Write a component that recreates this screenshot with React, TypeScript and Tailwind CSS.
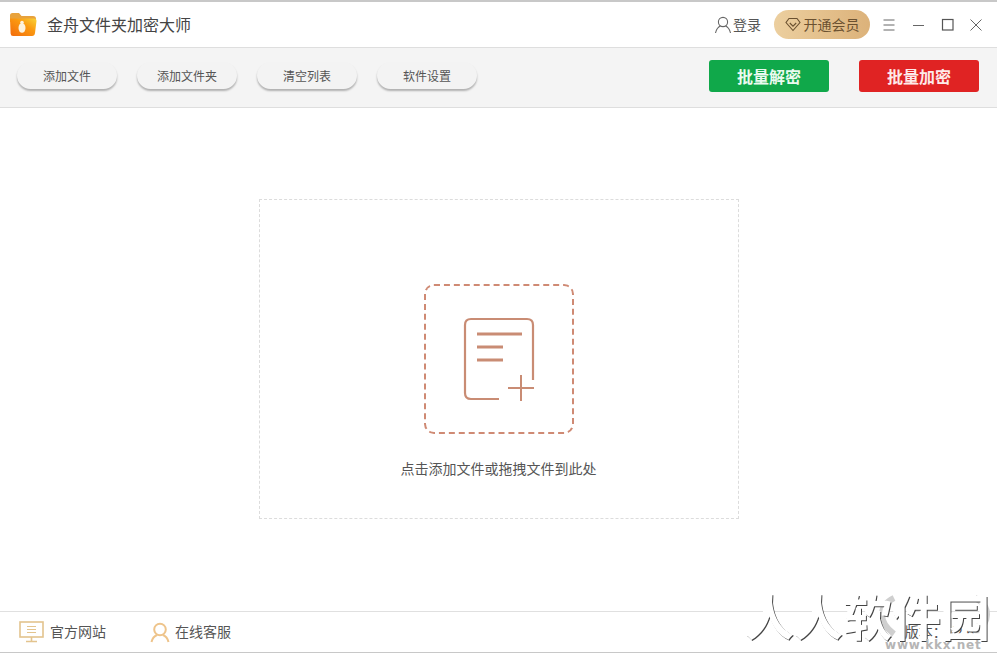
import React from "react";

const font = { fontFamily: '"Noto Sans CJK SC", "Liberation Sans", sans-serif' };

function Tool({ label }: { label: string }) {
  return (
    <button className="w-[100px] h-[27px] rounded-full bg-[#f3f3f3] text-[12px] leading-none text-[#555] shadow-[0_2px_2px_rgba(0,0,0,0.28)]">
      {label}
    </button>
  );
}

function FolderLogo() {
  return (
    <svg width="28" height="25" viewBox="0 0 28 25" className="shrink-0">
      <defs>
        <linearGradient id="fg" x1="0" y1="1" x2="1" y2="0">
          <stop offset="0" stopColor="#f26a0c" />
          <stop offset="0.6" stopColor="#fb9a10" />
          <stop offset="1" stopColor="#f8d43a" />
        </linearGradient>
      </defs>
      <path d="M1 3.5 Q1 1 3.5 1 H10 L12.5 4 H24 Q27 4 27 7 V10 H1 Z" fill="#e8a23c" />
      <path d="M1 6.5 H25 Q27.5 6.5 27.5 9 L26 21 Q25.7 24 23 24 H4 Q1.8 24 1.6 21.5 Z" fill="url(#fg)" />
      <ellipse cx="13" cy="16" rx="3.5" ry="4.8" fill="#fdf3de" />
      <circle cx="13" cy="10.5" r="1.8" fill="#fdf3de" />
    </svg>
  );
}

export default function App() {
  return (
    <div style={font} className="relative w-[997px] h-[653px] overflow-hidden bg-white flex flex-col">
      <header className="h-[48px] shrink-0 border-t-2 border-b border-t-[#c8c8c8] border-b-[#dedede] flex items-center pl-[9px] bg-white">
        <FolderLogo />
        <span className="ml-[10px] mb-[2px] text-[16px] text-[#444]">金舟文件夹加密大师</span>
        <div className="ml-auto flex items-center">
          <svg width="18" height="18" viewBox="0 0 18 18" fill="none" stroke="#666" strokeWidth="1.1" className="mr-[1px]">
            <circle cx="9" cy="6" r="4.6" />
            <path d="M1.5 17 C2.5 12.5 5 10.6 6.5 10 M16.5 17 C15.5 12.5 13 10.6 11.5 10" />
          </svg>
          <span className="text-[14px] text-[#555]">登录</span>
          <div className="ml-[13px] w-[96px] h-[29px] rounded-full bg-gradient-to-r from-[#eccf9f] to-[#dcb27a] flex items-center justify-center gap-[3px] text-[14px] text-[#6b5130]">
            <svg width="16" height="15" viewBox="0 0 16 15" fill="none" stroke="#6b5130" strokeWidth="1.1">
              <path d="M4 1.5 H12 L15 5.5 L8 13.5 L1 5.5 Z" />
              <path d="M4.8 6 L8 9.2 L11.2 6" />
            </svg>
            开通会员
          </div>
          <svg width="14" height="14" viewBox="0 0 14 14" stroke="#666" strokeWidth="1" className="ml-[12px]">
            <path d="M1.5 2 H12.5 M1.5 7 H12.5 M1.5 12 H12.5" />
          </svg>
          <svg width="14" height="14" viewBox="0 0 14 14" stroke="#666" strokeWidth="1" className="ml-[16px]">
            <path d="M1 7.5 H12" />
          </svg>
          <svg width="14" height="14" viewBox="0 0 14 14" fill="none" stroke="#555" strokeWidth="1.2" className="ml-[15px]">
            <rect x="1.5" y="1.5" width="10.5" height="10.5" />
          </svg>
          <svg width="14" height="14" viewBox="0 0 14 14" stroke="#666" strokeWidth="1" className="ml-[14px] mr-[14px]">
            <path d="M1.5 1.5 L12.5 12.5 M12.5 1.5 L1.5 12.5" />
          </svg>
        </div>
      </header>

      <div className="h-[60px] shrink-0 bg-[#f4f4f4] border-b border-[#dedede] flex items-center pl-[17px] pr-[18px] pb-[4px]">
        <div className="flex gap-[20px]">
          <Tool label="添加文件" />
          <Tool label="添加文件夹" />
          <Tool label="清空列表" />
          <Tool label="软件设置" />
        </div>
        <button className="ml-auto w-[120px] h-[32px] rounded-[3px] bg-[#10a84a] text-[16px] font-bold text-[#eafaf0]">批量解密</button>
        <button className="ml-[30px] w-[120px] h-[32px] rounded-[3px] bg-[#e02323] text-[16px] font-bold text-[#fdeaea]">批量加密</button>
      </div>

      <main className="flex-1 flex items-start justify-center pt-[91px]">
        <div className="w-[480px] h-[320px] border border-dashed border-[#dcdcdc] flex flex-col items-center pt-[84px]">
          <div className="w-[150px] h-[150px] rounded-[10px] border-2 border-dashed border-[#cf8a74] flex items-center justify-center">
            <svg width="72" height="84" viewBox="0 0 72 84" fill="none" stroke="#c98c74" strokeWidth="2.2">
              <path d="M70 63 V8 Q70 2 64 2 H8 Q2 2 2 8 V76 Q2 82 8 82 H36" />
              <path d="M14 17 H59 M14 30 H40 M14 43 H40" strokeWidth="3" />
              <path d="M45 71 H71 M58 58 V84" strokeWidth="2" />
            </svg>
          </div>
          <p className="mt-[24px] text-[14px] leading-[20px] text-[#555]">点击添加文件或拖拽文件到此处</p>
        </div>
      </main>

      <footer className="h-[42px] shrink-0 border-t border-b border-t-[#e0e0e0] border-b-[#c8c8c8] flex items-center pl-[19px] text-[14px] text-[#555]">
        <svg width="25" height="22" viewBox="0 0 25 22" fill="none" stroke="#e3c48e" strokeWidth="1.6">
          <rect x="1" y="1" width="23" height="15" />
          <path d="M12.5 16 V20 M7 20.5 H18" />
          <path d="M8 5.5 H17 M8 8.5 H17 M8 11.5 H17" strokeWidth="1.2" />
        </svg>
        <span className="ml-[6px] mb-[2px]">官方网站</span>
        <svg width="20" height="21" viewBox="0 0 20 21" fill="none" stroke="#eec48b" strokeWidth="2" className="ml-[44px]">
          <circle cx="10" cy="7.5" r="5.8" />
          <path d="M1.5 20 C2.5 16 4.5 14 7 13 M18.5 20 C17.5 16 15.5 14 13 13" />
        </svg>
        <span className="ml-[5px] mb-[2px]">在线客服</span>
        <span className="ml-auto mr-[11px] mb-[2px]">版本：V2.6.6</span>
      </footer>

      <div className="absolute left-[745px] top-[585px] w-[252px] h-[68px] pointer-events-none">
        <svg width="125" height="50" viewBox="0 0 125 50" fill="none" stroke="#cfcfcf" strokeWidth="6" className="absolute left-[127px] top-[9px]">
          <path d="M22 40 C6 28 6 12 22 4 M103 4 C119 12 119 28 103 40" />
        </svg>
        <span className="absolute left-[0px] top-[0px] text-[49px] leading-[60px] text-white font-bold whitespace-nowrap [text-shadow:1px_1px_0_#444,-1px_0_0_#fff]">人人软件园</span>
        <span className="absolute left-[140px] top-[52px] text-[12px] leading-[16px] font-bold tracking-[0.8px] text-[#b5b5b5] whitespace-nowrap" style={{ fontFamily: '"DejaVu Sans", sans-serif' }}>www.kkx.net</span>
      </div>
    </div>
  );
}
